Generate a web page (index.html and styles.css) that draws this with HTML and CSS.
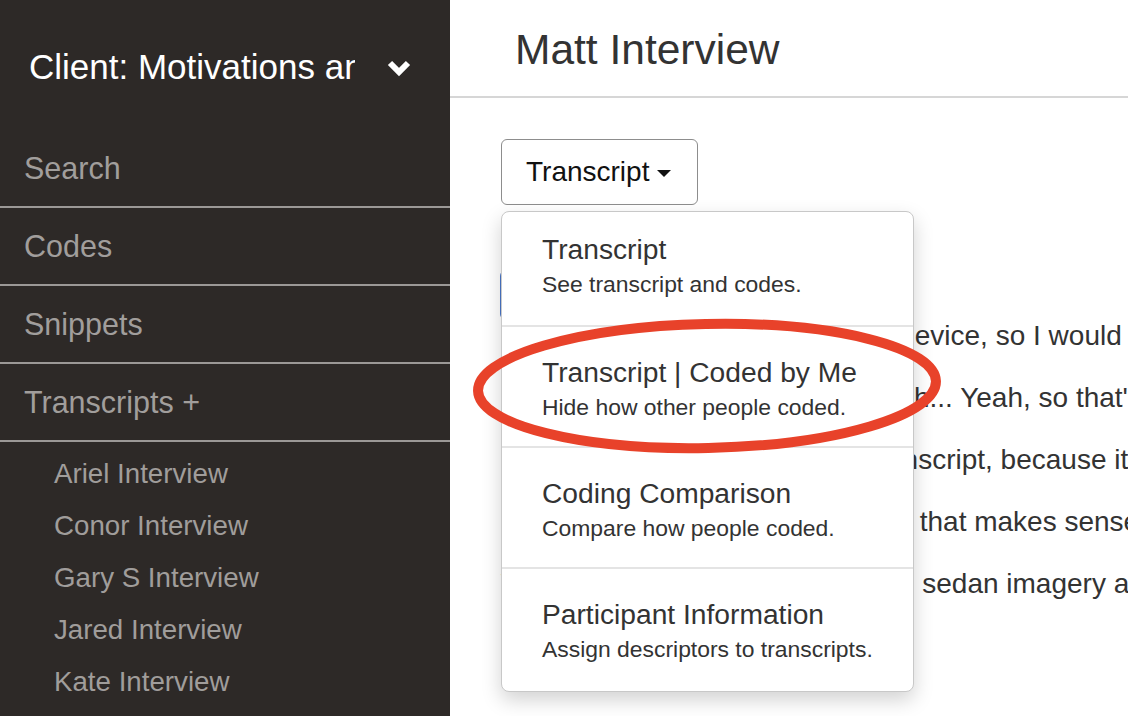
FILE: index.html
```html
<!DOCTYPE html>
<html lang="en">
<head>
<meta charset="utf-8">
<title>Matt Interview</title>
<link rel="stylesheet" href="styles.css">
</head>
<body>
<div class="app">
  <aside class="sidebar">
    <div class="project">
      <span class="project-name">Client: Motivations and Perceptions</span>
      <svg class="chev" width="24" height="18" viewBox="0 0 24 18"><path d="M3 4 L12 13 L21 4" fill="none" stroke="#fff" stroke-width="6" stroke-linejoin="miter"/></svg>
    </div>
    <nav class="nav">
      <a class="nav-item">Search</a>
      <a class="nav-item">Codes</a>
      <a class="nav-item">Snippets</a>
      <a class="nav-item">Transcripts +</a>
    </nav>
    <ul class="sublist">
      <li>Ariel Interview</li>
      <li>Conor Interview</li>
      <li>Gary S Interview</li>
      <li>Jared Interview</li>
      <li>Kate Interview</li>
    </ul>
  </aside>
  <main class="main">
    <header class="page-head"><h1>Matt Interview</h1></header>
    <section class="content">
      <div class="dd">
        <button class="dd-btn">Transcript <span class="caret"></span></button>
        <div class="dd-menu">
          <div class="dd-item"><div class="dd-title">Transcript</div><div class="dd-sub">See transcript and codes.</div></div>
          <div class="dd-item"><div class="dd-title">Transcript | Coded by Me</div><div class="dd-sub">Hide how other people coded.</div></div>
          <div class="dd-item"><div class="dd-title">Coding Comparison</div><div class="dd-sub">Compare how people coded.</div></div>
          <div class="dd-item"><div class="dd-title">Participant Information</div><div class="dd-sub">Assign descriptors to transcripts.</div></div>
        </div>
      </div>
      <div class="transcript">
        <span class="code-tag"></span>
        <p class="line">I'd say it's usually on my mobile device, so I would like it to work well there.</p>
        <p class="line">Yeah, I guess it works well enough... Yeah, so that's the main thing for me.</p>
        <p class="line">I like being able to see all the transcript, because it helps me follow along.</p>
        <p class="line">So, I can see who said what, and that makes sense to me.</p>
        <p class="line">Well, it was just a lot of that usual sedan imagery and stuff like that.</p>
      </div>
    </section>
  </main>
  <svg class="annot" width="1128" height="716" viewBox="0 0 1128 716">
    <ellipse cx="707" cy="386" rx="229" ry="62" fill="none" stroke="#e8422a" stroke-width="10" transform="rotate(-1.2 707 386)"/>
  </svg>
</div>
</body>
</html>
```
FILE: styles.css
```css
* { box-sizing: border-box; }
html, body { margin: 0; padding: 0; }
body {
  font-family: "Liberation Sans", Arial, Helvetica, sans-serif;
  width: 1128px;
  height: 716px;
  overflow: hidden;
  background: #fff;
}
.app {
  position: relative;
  display: flex;
  width: 1128px;
  height: 716px;
  overflow: hidden;
}
.sidebar {
  width: 450px;
  flex: 0 0 450px;
  background: #2d2927;
  color: #a19e9c;
}
.project {
  height: 130px;
  display: flex;
  align-items: center;
  padding: 4px 0 0 29px;
}
.project-name {
  color: #fff;
  font-size: 35px;
  width: 326px;
  white-space: nowrap;
  overflow: hidden;
}
.chev { margin-left: 32px; margin-top: 2px; }
.nav { display: flex; flex-direction: column; }
.nav-item {
  display: block;
  height: 78px;
  line-height: 76px;
  padding-left: 24px;
  font-size: 30.5px;
  color: #a19e9c;
  border-bottom: 2px solid #9b9896;
}
.sublist {
  list-style: none;
  margin: 0;
  padding: 6px 0 0 54px;
}
.sublist li {
  height: 52px;
  line-height: 52px;
  font-size: 27.7px;
  color: #a09d9b;
}
.main {
  flex: 1;
  min-width: 0;
  overflow: hidden;
}
.page-head {
  height: 98px;
  border-bottom: 2px solid #d6d6d6;
  padding: 3px 0 0 65px;
  display: flex;
  align-items: center;
}
.page-head h1 {
  margin: 0;
  font-size: 42.5px;
  font-weight: normal;
  color: #333;
}
.content { padding: 41px 0 0 51px; }
.dd { position: relative; display: inline-block; z-index: 2; }
.dd-btn {
  font-family: inherit;
  height: 66px;
  width: 197px;
  padding: 0 0 0 24px;
  background: #fff;
  border: 1px solid #8d8d8d;
  border-radius: 6px;
  font-size: 28px;
  color: #111;
  text-align: left;
  display: flex;
  align-items: center;
}
.caret {
  display: inline-block;
  margin-left: 8px;
  margin-top: 3px;
  border-left: 7px solid transparent;
  border-right: 7px solid transparent;
  border-top: 7px solid #111;
}
.dd-menu {
  position: absolute;
  top: 72px;
  left: 0;
  width: 413px;
  background: #fff;
  border: 1px solid #c8c8c8;
  border-radius: 8px;
  box-shadow: 0 8px 20px rgba(0, 0, 0, 0.18);
}
.dd-item {
  padding: 27px 20px 22px 40px;
  border-top: 2px solid #e4e4e4;
  color: #333;
}
.dd-item:first-child { border-top: 0; padding-top: 19px; padding-bottom: 24px; }
.dd-item:last-child { padding-bottom: 25px; }
.dd-title { font-size: 28.2px; line-height: 36px; }
.dd-sub { font-size: 22.9px; line-height: 34px; }
.transcript {
  position: relative;
  margin-top: 65px;
  padding-top: 35px;
}
.code-tag {
  position: absolute;
  top: 0;
  left: -1px;
  width: 60px;
  height: 50px;
  border-radius: 6px;
  background: #4a77c9;
}
.line {
  margin: 0;
  font-size: 28px;
  line-height: 62px;
  color: #333;
  white-space: nowrap;
}
.annot {
  position: absolute;
  left: 0;
  top: 0;
  pointer-events: none;
  z-index: 5;
}
```
